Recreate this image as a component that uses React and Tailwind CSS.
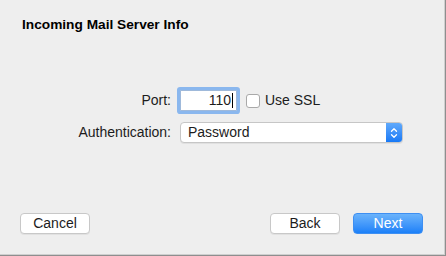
import React from "react";

export default function App() {
  return (
    <div className="w-[446px] h-[256px] bg-[#8e8e8e] font-['Liberation_Sans',Arial,sans-serif] text-[14px] text-[#1c1c1c]">
      <div className="w-[445px] h-[255px] bg-[#eeeeee] border-r border-b border-[#cfcfcf] flex flex-col">
        <div className="pt-[17px] pl-[22px] leading-[16px] font-bold text-[13.7px] text-black">
          Incoming Mail Server Info
        </div>

        <div className="mt-[57px] grid grid-cols-[171px_auto] gap-x-[9px] gap-y-[11px] items-center">
          <div className="text-right leading-[21px]">Port:</div>
          <div className="flex items-center">
            <div className="w-[57px] h-[21px] bg-white border border-[#9fb9da] rounded-[1px] shadow-[0_0_0_3px_#8ab7ee] flex items-center justify-end pr-[3px] leading-[19px]">
              <span>110</span>
              <span className="ml-[1px] w-[1px] h-[15px] bg-black"></span>
            </div>
            <div className="ml-[9px] w-[14px] h-[14px] bg-white border border-[#a9a9a9] rounded-[3px]"></div>
            <span className="ml-[5px] leading-[21px]">Use SSL</span>
          </div>

          <div className="text-right leading-[21px]">Authentication:</div>
          <div className="w-[223px] h-[21px] bg-white border border-[#c6c6c6] rounded-[4px] flex items-stretch shadow-[0_1px_0_rgba(0,0,0,0.06)] overflow-hidden">
            <span className="flex-1 pl-[7px] leading-[19px]">Password</span>
            <span className="w-[16px] bg-gradient-to-b from-[#5fa9fb] to-[#1679f6] flex items-center justify-center">
              <svg width="8" height="12" viewBox="0 0 8 12" fill="none" stroke="white" strokeWidth="1.3" strokeLinecap="round" strokeLinejoin="round">
                <path d="M1.5 4.2 L4 1.7 L6.5 4.2" />
                <path d="M1.5 7.8 L4 10.3 L6.5 7.8" />
              </svg>
            </span>
          </div>
        </div>

        <div className="mt-auto pb-[20px] pl-[20px] pr-[21px] flex items-center">
          <button className="w-[70px] h-[21px] bg-white border border-[#c8c8c8] rounded-[4px] shadow-[0_1px_0_rgba(0,0,0,0.05)] leading-[19px] text-[#1c1c1c]">
            Cancel
          </button>
          <div className="flex-1"></div>
          <button className="w-[70px] h-[21px] bg-white border border-[#c8c8c8] rounded-[4px] shadow-[0_1px_0_rgba(0,0,0,0.05)] leading-[19px] text-[#1c1c1c]">
            Back
          </button>
          <button className="ml-[13px] w-[70px] h-[21px] bg-gradient-to-b from-[#6ab3fb] to-[#1a80f8] border border-[#3e8ff2] rounded-[4px] leading-[19px] text-white">
            Next
          </button>
        </div>
      </div>
    </div>
  );
}
